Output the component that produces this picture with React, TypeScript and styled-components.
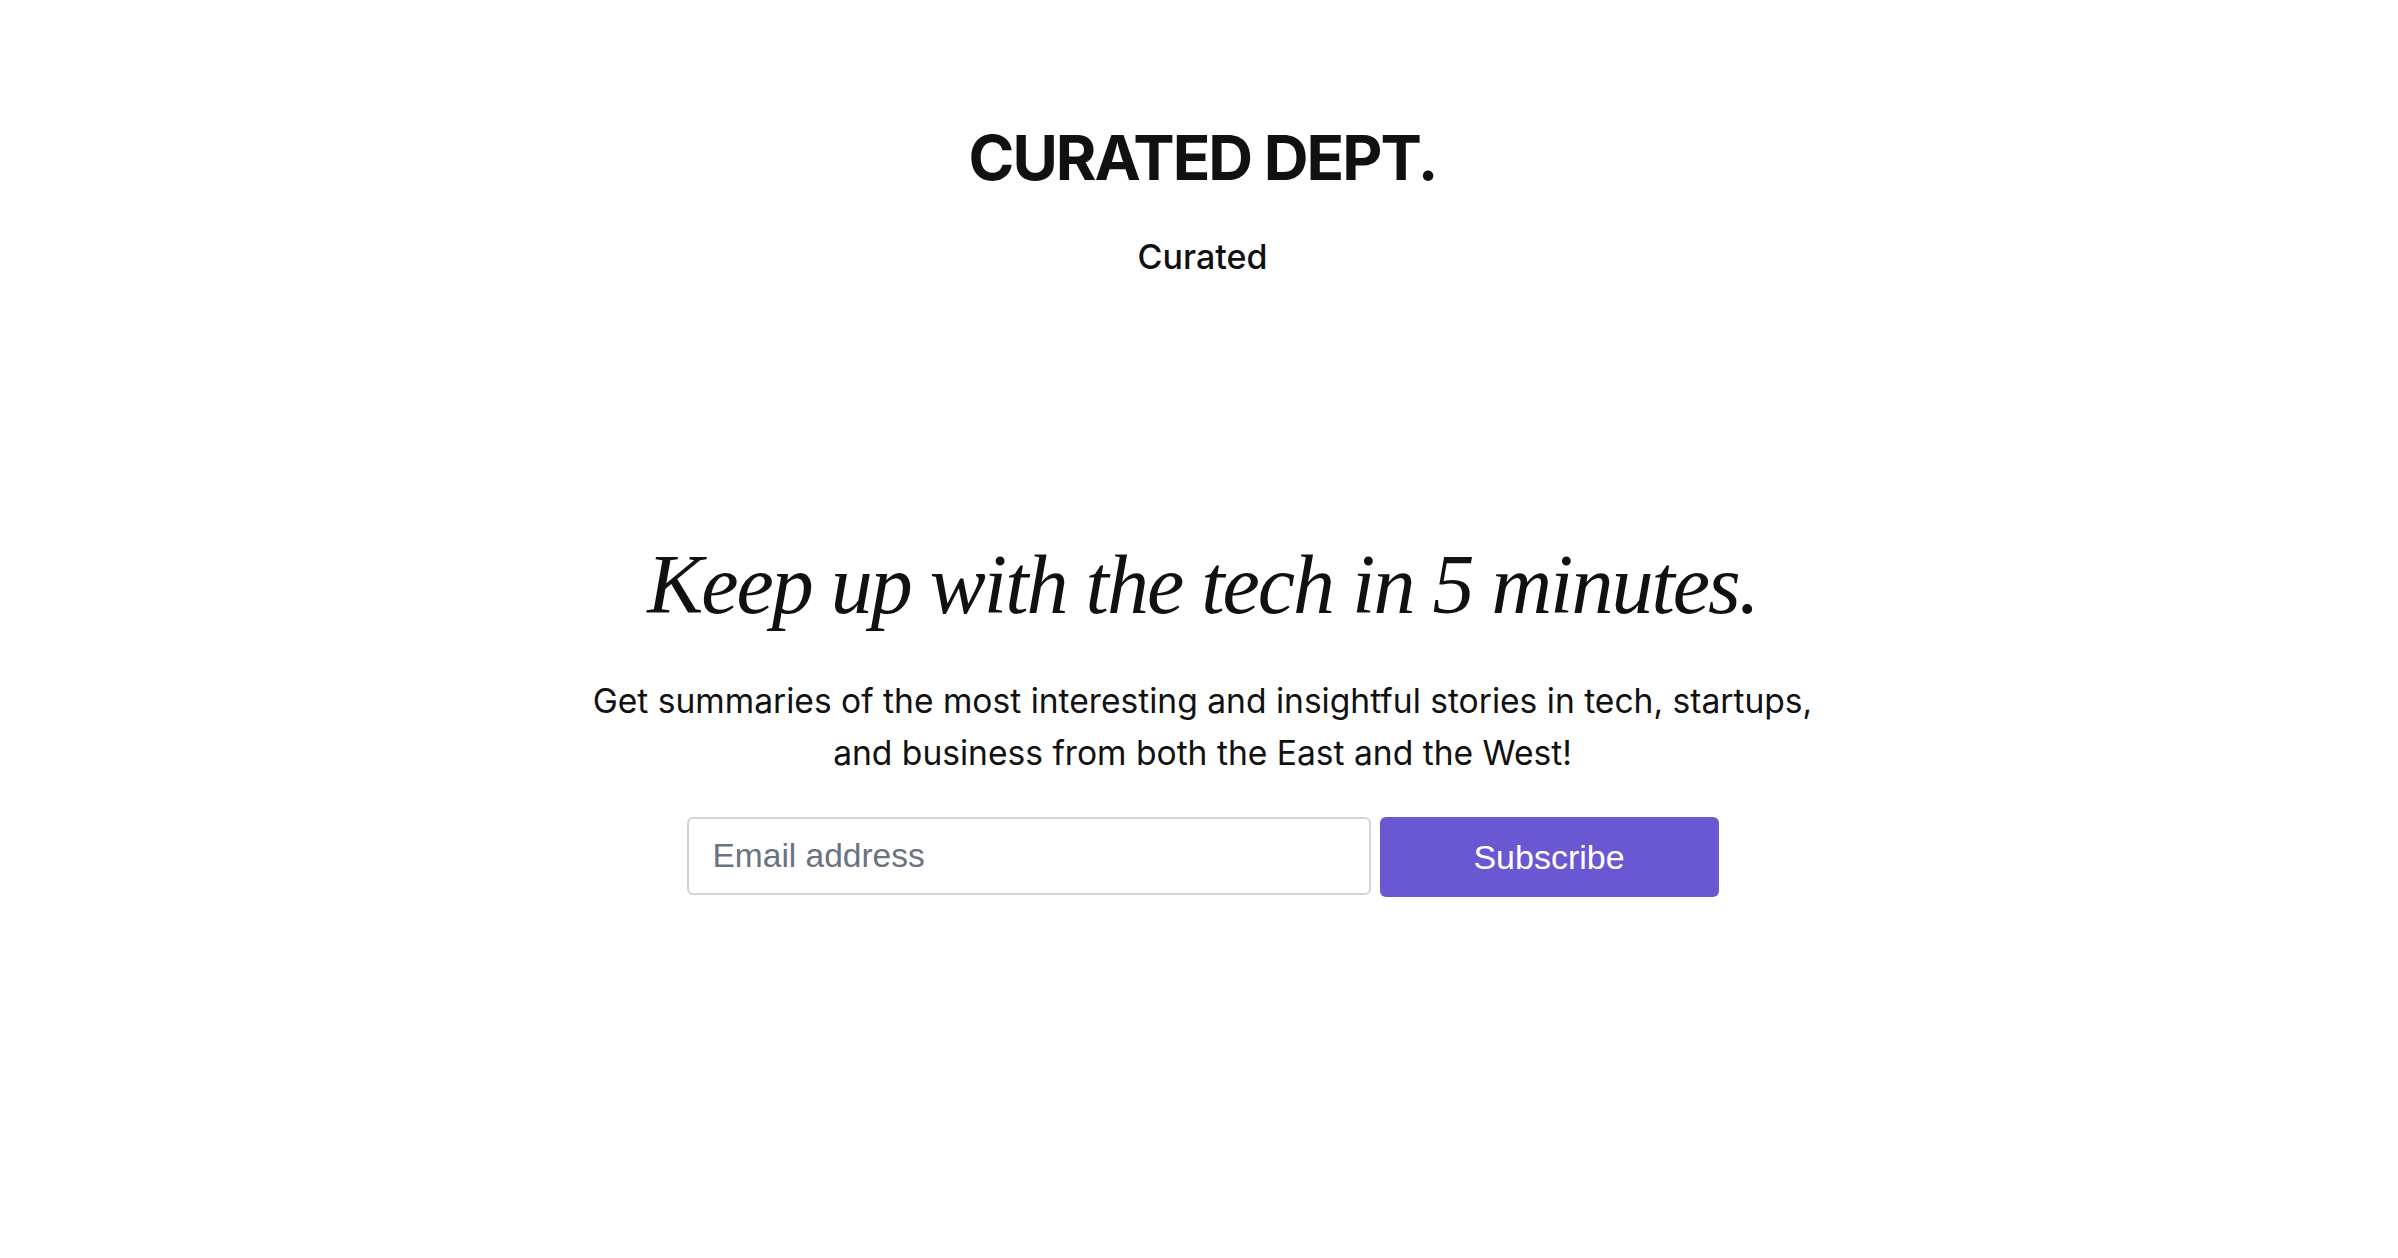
import React from "react";
import styled, { createGlobalStyle } from "styled-components";

const Global = createGlobalStyle`
  html, body { margin: 0; padding: 0; background: #ffffff; }
  body { font-family: Inter, "Noto Sans", sans-serif; color: #111111; }
  * { box-sizing: border-box; }
`;

const Page = styled.main`
  min-height: 1258px;
  display: flex;
  flex-direction: column;
  align-items: center;
  padding-left: 7px;
`;

const Header = styled.header`
  display: flex;
  flex-direction: column;
  align-items: center;
  padding-top: 120px;
`;

const Brand = styled.h1`
  margin: 0;
  font-family: Inter, sans-serif;
  font-weight: 700;
  font-size: 62px;
  line-height: 76px;
  letter-spacing: -2px;
  color: #111111;
`;

const Tagline = styled.div`
  margin-top: 39px;
  font-family: Inter, sans-serif;
  font-weight: 500;
  font-size: 34px;
  line-height: 44px;
  color: #111111;
`;

const Hero = styled.section`
  display: flex;
  flex-direction: column;
  align-items: center;
  margin-top: 256px;
`;

const Headline = styled.h2`
  margin: 0;
  font-family: "Liberation Serif", "Times New Roman", serif;
  font-style: italic;
  font-weight: 400;
  font-size: 84px;
  line-height: 100px;
  letter-spacing: -2px;
  color: #111111;
`;

const Lead = styled.p`
  margin: 40px 0 0;
  font-family: Inter, sans-serif;
  font-size: 33.6px;
  line-height: 52px;
  text-align: center;
  color: #111111;
`;

const Form = styled.form`
  display: flex;
  gap: 9px;
  margin-top: 38px;
`;

const EmailInput = styled.input`
  width: 684px;
  height: 78px;
  padding: 0 24px;
  border: 2px solid #d1d5db;
  border-radius: 6px;
  font-family: "Liberation Sans", Arial, sans-serif;
  font-size: 33.5px;
  color: #111111;
  outline: none;
  &::placeholder { color: #6b7280; }
`;

const SubmitButton = styled.button`
  width: 339px;
  height: 80px;
  border: none;
  border-radius: 6px;
  background: #6a57d2;
  color: #ffffff;
  font-family: "Liberation Sans", Arial, sans-serif;
  font-size: 34px;
  cursor: pointer;
`;

export default function App() {
  return (
    <>
      <Global />
      <Page>
        <Header>
          <Brand>CURATED DEPT.</Brand>
          <Tagline>Curated</Tagline>
        </Header>
        <Hero>
          <Headline>Keep up with the tech in 5 minutes.</Headline>
          <Lead>
            Get summaries of the most interesting and insightful stories in tech, startups,
            <br />
            and business from both the East and the West!
          </Lead>
          <Form onSubmit={(e) => e.preventDefault()}>
            <EmailInput type="email" placeholder="Email address" />
            <SubmitButton type="submit">Subscribe</SubmitButton>
          </Form>
        </Hero>
      </Page>
    </>
  );
}
